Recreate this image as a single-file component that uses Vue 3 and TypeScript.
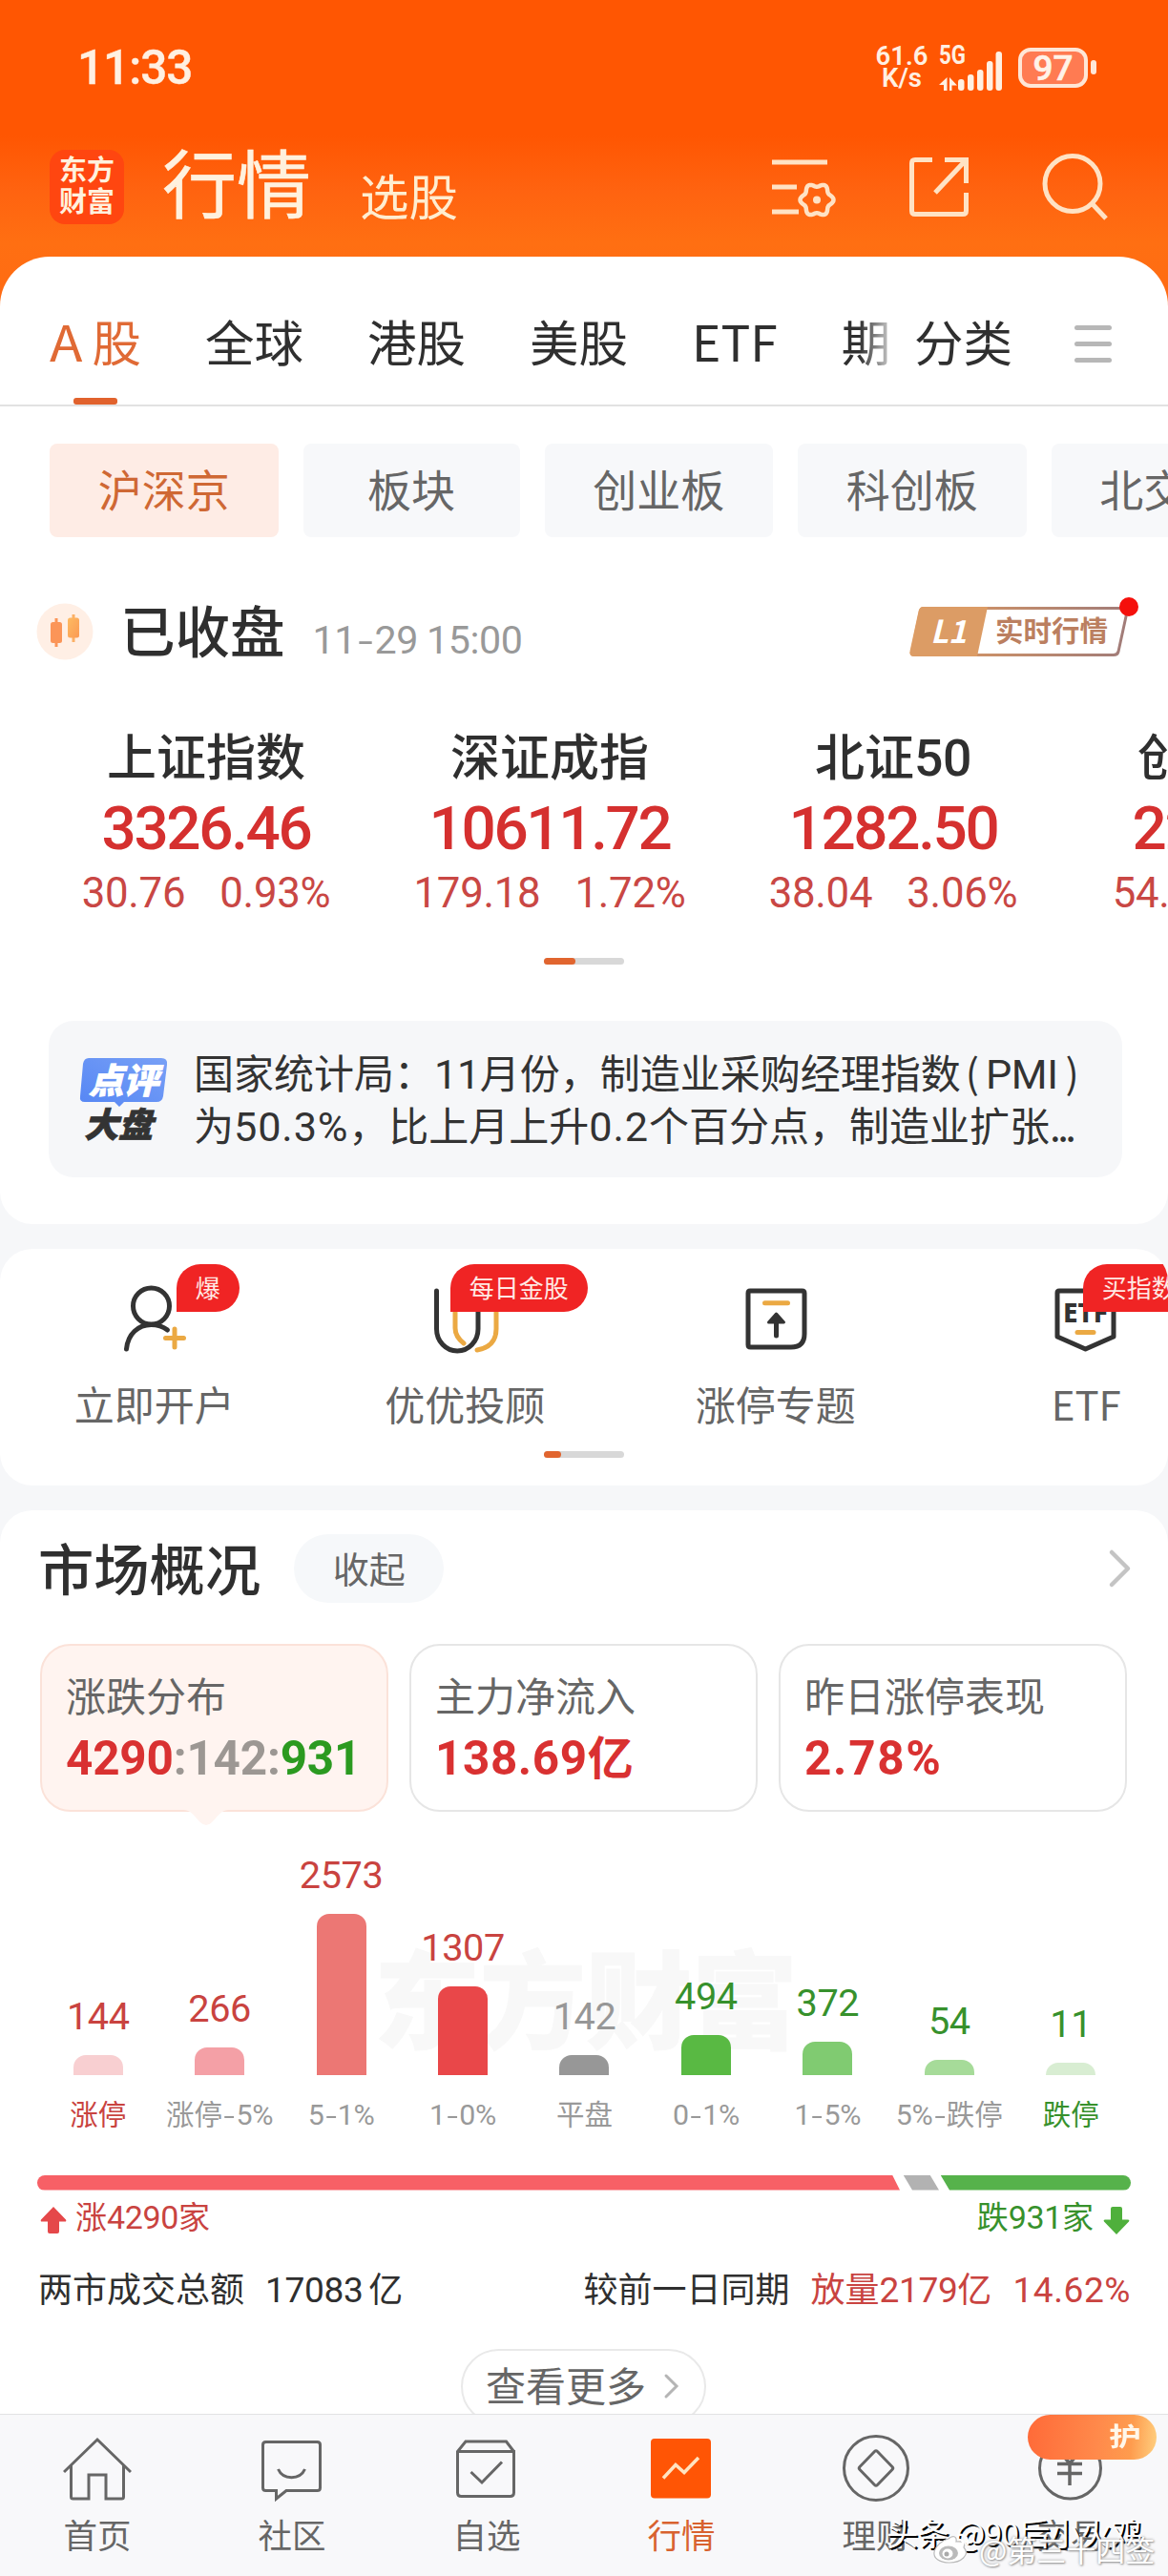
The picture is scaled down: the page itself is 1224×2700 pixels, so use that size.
<script setup lang="ts">
import { h } from 'vue'

interface Index { name: string; price: string; change: string; pct: string }
interface Bar { label: string; value: number; height: number; color: string; tone: string; edge?: boolean }

const tabs: string[] = ['全球', '港股', '美股', 'ETF', '期']
const chips: string[] = ['沪深京', '板块', '创业板', '科创板', '北交所']

const indices: Index[] = [
  { name: '上证指数', price: '3326.46', change: '30.76', pct: '0.93%' },
  { name: '深证成指', price: '10611.72', change: '179.18', pct: '1.72%' },
  { name: '北证50', price: '1282.50', change: '38.04', pct: '3.06%' },
  { name: '创业板指', price: '2224.00', change: '54.50', pct: '2.50%' },
]

const bars: Bar[] = [
  { label: '涨停', value: 144, height: 21, color: '#f8cfd1', tone: 'up', edge: true },
  { label: '涨停-5%', value: 266, height: 29, color: '#f4a0a6', tone: 'up' },
  { label: '5-1%', value: 2573, height: 169, color: '#ec7774', tone: 'up' },
  { label: '1-0%', value: 1307, height: 93, color: '#e94749', tone: 'up' },
  { label: '平盘', value: 142, height: 21, color: '#979797', tone: 'flat' },
  { label: '0-1%', value: 494, height: 42, color: '#59b943', tone: 'down' },
  { label: '1-5%', value: 372, height: 35, color: '#80cb71', tone: 'down' },
  { label: '5%-跌停', value: 54, height: 16, color: '#a6db99', tone: 'down' },
  { label: '跌停', value: 11, height: 13, color: '#d8edd2', tone: 'down', edge: true },
]

/** Sets figures in the numeric face and leaves Chinese text in the page face. */
const Mix = (props: { t: string | number }) =>
  h(
    'span',
    String(props.t)
      .split(/([0-9.:%]+|-)/)
      .filter(Boolean)
      .map((s) => (s === '-' ? h('span', { class: 'hy' }, s) : /[0-9.:%]/.test(s) ? h('span', { class: 'num' }, s) : s)),
  )
Mix.props = ['t']

/** Outline of the six-lobed settings gear. */
const gear: string =
  Array.from({ length: 72 }, (_, i) => {
    const a = (i * Math.PI) / 36
    const r = 15.6 + 1.9 * Math.cos(6 * a)
    return `${i ? 'L' : 'M'}${(50 + r * Math.cos(a)).toFixed(1)} ${(49.5 + r * Math.sin(a)).toFixed(1)}`
  }).join('') + 'z'
</script>

<template>
  <div class="page">
    <div class="scroll">
      <header class="top">
        <div class="statusbar">
          <Mix class="clock" t="11:33" />
          <div class="net"><span>61.6</span><span class="unit">K/s</span></div>
          <svg class="signal" width="66" height="50" viewBox="0 -2 66 50">
            <text x="0" y="20" class="g5" textLength="28" lengthAdjust="spacingAndGlyphs">5G</text>
            <path d="M8.500 34v14H5v-6H0zM11 34v14h2.500v-5.500H19z" />
            <rect x="20" y="36" width="6.500" height="12" rx="3" />
            <rect x="30" y="31" width="6.500" height="17" rx="3" />
            <rect x="40" y="26" width="6.500" height="22" rx="3" />
            <rect x="50" y="17" width="6.500" height="31" rx="3" />
            <rect x="59.500" y="7" width="6.500" height="41" rx="3" />
          </svg>
          <div class="battery"><span>97</span></div>
          <i class="nub"></i>
        </div>
        <div class="titlebar">
          <div class="logo"><span>东方</span><span>财富</span></div>
          <h1>行情</h1>
          <span class="sub">选股</span>
          <div class="tools">
            <svg width="72" height="72" viewBox="0 0 72 72" class="line">
              <path d="M3 10h58M3 36h26M3 62h28" />
              <path :d="gear" stroke-width="4.500" stroke-linejoin="round" />
              <circle cx="50" cy="49.500" r="4" fill="#ffe2c4" stroke="none" />
            </svg>
            <svg width="72" height="72" viewBox="0 0 72 72" class="line">
              <path d="M29 7.500H11q-3.500 0-3.500 3.500v50q0 3.500 3.500 3.500h50q3.500 0 3.500-3.500V42M42 7.500h22.500V32M64 8 32 42" />
            </svg>
            <svg width="72" height="72" viewBox="0 0 72 72" class="line">
              <circle cx="34" cy="32.500" r="29" />
              <path d="m54 53 15 16" />
            </svg>
          </div>
        </div>
      </header>

      <section class="panel">
        <nav class="tabs">
          <div class="tablist">
            <span class="tab on"><b>A</b>股</span>
            <span v-for="t in tabs" :key="t" class="tab">{{ t }}</span>
          </div>
          <span class="tab">分类</span>
          <div class="menu"><i></i><i></i><i></i></div>
        </nav>

        <div class="chips">
          <span v-for="(c, i) in chips" :key="c" class="chip" :class="{ on: i === 0, two: c.length === 2 }">{{ c }}</span>
        </div>

        <div class="closed">
          <svg class="candle" width="60" height="60" viewBox="0 0 60 60">
            <defs>
              <linearGradient id="cg" x1="0" y1="0" x2="1" y2="1">
                <stop offset="0" stop-color="#fdbb62" /><stop offset="1" stop-color="#fb9a55" />
              </linearGradient>
            </defs>
            <circle cx="30" cy="30" r="29.500" fill="#ffefe5" />
            <path d="M21 16v30" stroke="#fb9558" stroke-width="3" />
            <rect x="15" y="20" width="12" height="22" rx="2.500" fill="#fb9558" />
            <path d="M39 12v29" stroke="#fbb066" stroke-width="3" />
            <rect x="33" y="15.500" width="12" height="21" rx="2.500" fill="url(#cg)" />
          </svg>
          <h2>已收盘</h2>
          <time><Mix t="11-29 15:00" /></time>
          <div class="level">
            <svg width="232" height="54" viewBox="0 0 232 54">
              <defs>
                <linearGradient id="lg" x1="0" x2="1">
                  <stop offset="0" stop-color="#e3a368" /><stop offset=".3" stop-color="#cc9168" /><stop offset="1" stop-color="#a17c79" />
                </linearGradient>
              </defs>
              <path d="M15 2.500H225q4 0 3 4L219 48q-1 3.500-5 3.500H5q-4 0-3-4L11 6q1-3.500 4-3.500z" fill="#fff" stroke="url(#lg)" stroke-width="3" />
              <path d="M14 1H82L71 53H5q-5 0-4-5L10 5q1-4 4-4z" fill="#dc9c65" />
              <text x="22" y="39" class="l1" textLength="38" lengthAdjust="spacingAndGlyphs">L1</text>
              <text x="90" y="37" class="rt">实时行情</text>
            </svg>
            <i class="dot"></i>
          </div>
        </div>

        <div class="indices">
          <div v-for="x in indices" :key="x.name" class="index">
            <strong><Mix :t="x.name" /></strong>
            <em><Mix :t="x.price" /></em>
            <p><Mix :t="x.change" /><Mix :t="x.pct" /></p>
          </div>
        </div>
        <div class="pager"><i></i></div>

        <div class="news">
          <div class="newslogo">
            <svg width="94" height="52" viewBox="0 0 94 52">
              <defs>
                <linearGradient id="ng" x1="0" y1="1" x2="1" y2="0">
                  <stop offset="0" stop-color="#5586f4" /><stop offset="1" stop-color="#78a0f6" />
                </linearGradient>
              </defs>
              <path d="M10 0H86q7 0 6 7L88 40q-1 6-7 6H47l-5 5-5-5H6q-6 0-5-6L4 6q1-6 6-6z" fill="url(#ng)" />
              <text x="10" y="37" class="nl">点评</text>
            </svg>
            <span>大盘</span>
          </div>
          <div class="newstext">
            <p><Mix t="国家统计局：11月份，制造业采购经理指数" /><i class="po">(</i><span class="num">PMI</span><i class="pc">)</i></p>
            <p class="wide"><Mix t="为50.3%，比上月上升0.2个百分点，制造业扩张" /><i class="dots">...</i></p>
          </div>
        </div>
      </section>

      <section class="quick">
        <div class="quickrow">
          <div class="entry">
            <div class="ico">
              <svg width="80" height="80" viewBox="0 0 80 80" class="dark">
                <circle cx="36.500" cy="26" r="19" />
                <path d="M10.500 71C12 55 23 45.500 36.500 45.500c7 0 12.500 2 17 5.500" />
                <path class="gold" d="M51.500 59.500h19M61 50v19" />
              </svg>
              <span class="tag t1">爆</span>
            </div>
            <span>立即开户</span>
          </div>
          <div class="entry">
            <div class="ico">
              <svg width="80" height="80" viewBox="0 0 80 80" class="dark">
                <path class="gold" d="M30 22v27q0 9 9 16M73 22v28c0 12-7 20-20 22" />
                <path d="M10.500 10v40a21.750 23 0 0 0 43.500 0V20" />
              </svg>
              <span class="tag t2">每日金股</span>
            </div>
            <span>优优投顾</span>
          </div>
          <div class="entry">
            <div class="ico">
              <svg width="80" height="80" viewBox="0 0 80 80" class="dark">
                <path d="M13 10h54.500q2.500 0 2.500 2.500V55q0 14-14 14H13.500Q11 69 11 66.500v-54Q11 10 13 10z" />
                <path class="gold" d="M28.500 22.700h24" />
                <path d="M40.500 37v20" />
                <path d="M40.500 34l8 9h-16z" fill="#333" stroke-width="3" />
              </svg>
            </div>
            <span>涨停专题</span>
          </div>
          <div class="entry">
            <div class="ico">
              <svg width="80" height="80" viewBox="0 0 80 80" class="dark">
                <path d="M12 10h55q2 0 2 2v46L39.500 71 10 58V12q0-2 2-2z" />
                <text x="16" y="43" class="etf" textLength="47" lengthAdjust="spacingAndGlyphs">ETF</text>
                <path class="gold" d="M31 53.400h17" />
              </svg>
              <span class="tag t4">买指数</span>
            </div>
            <span>ETF</span>
          </div>
        </div>
        <div class="pager short"><i></i></div>
      </section>

      <section class="market">
        <div class="mhead">
          <h2>市场概况</h2>
          <span class="fold">收起</span>
          <svg width="26" height="42" viewBox="0 0 26 42"><path d="m4 4 17 17L4 38" fill="none" stroke="#c4c4c4" stroke-width="4.500" stroke-linecap="round" stroke-linejoin="round" /></svg>
        </div>

        <div class="cards">
          <div class="card on">
            <span>涨跌分布</span>
            <b class="ratio"><Mix class="r" t="4290" /><Mix class="n" t=":142:" /><Mix class="g" t="931" /></b>
            <svg class="tip" width="48" height="18" viewBox="0 0 48 18"><path d="M0 0H48C40 0 38 5 30 13q-6 6-12 0C10 5 8 0 0 0z" fill="#fff4f0" /></svg>
          </div>
          <div class="card"><span>主力净流入</span><b><Mix class="r" t="138.69亿" /></b></div>
          <div class="card"><span>昨日涨停表现</span><b><Mix class="r pc2" t="2.78%" /></b></div>
        </div>

        <div class="chart">
          <div class="ghost">东方财富</div>
          <div v-for="b in bars" :key="b.label" class="col">
            <Mix class="val" :class="b.tone" :t="b.value" />
            <i :style="{ height: b.height + 'px', background: b.color }"></i>
          </div>
        </div>
        <div class="labels">
          <div v-for="b in bars" :key="b.label" :class="b.edge ? b.tone : ''"><Mix :t="b.label" /></div>
        </div>

        <div class="split"><i class="s1"></i><i class="s2"></i><i class="s3"></i></div>
        <div class="counts">
          <svg width="30" height="30" viewBox="0 0 30 30"><path d="M15 1 28 14.500q1 2-1 2h-6V27q0 2-2 2h-8q-2 0-2-2V16.500H3q-2 0-1-2z" fill="#e5484a" /></svg>
          <Mix class="up" t="涨4290家" />
          <Mix class="down last" t="跌931家" />
          <svg width="30" height="30" viewBox="0 0 30 30"><path d="M15 30 28 16.500q1-2-1-2h-6V3q0-2-2-2h-8Q9 1 9 3v11.500H3q-2 0-1 2z" fill="#4fb03c" /></svg>
        </div>
        <div class="totals">
          <span>两市成交总额</span><div class="amt"><Mix t="17083" /><s></s>亿</div>
          <span class="cmp">较前一日同期</span><Mix class="vol" t="放量2179亿" /><Mix class="pct" t="14.62%" />
        </div>
        <div class="more">查看更多
          <svg width="18" height="28" viewBox="0 0 18 28"><path d="m3 3 11 11L3 25" fill="none" stroke="#b5b5b5" stroke-width="3" stroke-linecap="round" /></svg>
        </div>
      </section>
    </div>

    <footer class="nav">
      <div class="item">
        <svg width="72" height="72" viewBox="0 0 72 72"><path d="M1 40 36 6l35 34M8.500 33v33q0 2 2 2H27V43h18v25h16.500q2 0 2-2V33" /></svg>
        <span>首页</span>
      </div>
      <div class="item">
        <svg width="72" height="72" viewBox="0 0 72 72"><path d="M8.500 8.500h54q3 0 3 3v45q0 3-3 3H30L19.500 68v-8.500h-11q-3 0-3-3v-45q0-3 3-3zM21.500 37c5 11.500 23 11.500 28 0" /></svg>
        <span>社区</span>
      </div>
      <div class="item">
        <svg width="72" height="72" viewBox="0 0 72 72"><path d="M6 18.500h58.500v43q0 4-4 4h-51q-4 0-4-4v-43L14 8h42.500l8 10.500M19.500 40 31 51l21-21.500" /></svg>
        <span>自选</span>
      </div>
      <div class="item on">
        <svg width="72" height="72" viewBox="0 0 72 72"><rect x="4" y="5" width="63" height="62.500" rx="4" fill="#ff5505" stroke="none" /><path d="m17 46.500 13-14 9 8 15-15.500" stroke="#ffe3c0" stroke-width="3.500" /></svg>
        <span>行情</span>
      </div>
      <div class="item">
        <svg width="72" height="72" viewBox="0 0 72 72"><circle cx="36" cy="36" r="33.500" /><path d="M34.500 18.500q1.500-1.500 3 0l15.500 16q1.500 1.500 0 3l-15.500 16q-1.500 1.500-3 0l-15.500-16q-1.500-1.500 0-3z" /></svg>
        <span>理财</span>
      </div>
      <div class="item">
        <div class="trade">
          <svg width="72" height="72" viewBox="0 0 72 72"><circle cx="35.500" cy="36" r="32" /><path d="M22 31.500h26M22 41.500h26M35 31v23M35 31 24 18M35 31l11-13" stroke-width="3.500" /></svg>
          <div class="promo"><span>护</span></div>
        </div>
        <span>交易</span>
      </div>
      <div class="mark1">头条 @90后小火鸡</div>
      <div class="mark2">
        <svg width="40" height="34" viewBox="0 0 40 34"><path d="M17 7c4-4 9-3 8 3 7-1 10 2 8 6 7 8-3 16-15 16C7 32 1 27 2 21 3 15 11 8 17 7z" fill="#fff" stroke="#bbb" stroke-width="1.200" /><ellipse cx="17" cy="22" rx="10" ry="7.500" fill="#bbb" /><ellipse cx="16" cy="22.500" rx="5.500" ry="5" fill="#fff" /><circle cx="15" cy="23" r="2.500" fill="#aaa" /><path d="M28 3c6-1 10 4 9 10M28 8c3 0 5 2 4 5" fill="none" stroke="#fff" stroke-width="2.500" /></svg>
        <span>@第三十四签</span>
      </div>
    </footer>
  </div>
</template>

<style>
body { margin: 0; }
.num { font-family: Roboto, sans-serif; font-size: 1.03em; letter-spacing: -.01em; line-height: 0; }
.index em .num { letter-spacing: -.037em; }
.index p .num { letter-spacing: -.006em; }
.clock .num { letter-spacing: -.02em; }
.card b .num { letter-spacing: .012em; }
.card b.ratio .num { letter-spacing: -.004em; }
.card b .pc2 .num { letter-spacing: .035em; }
.newstext .wide .num { letter-spacing: .02em; }
.totals .pct .num { letter-spacing: .015em; }
.hy { display: inline-block; transform: scaleX(1.3); margin: 0 .07em; line-height: 0; }
</style>

<style scoped>
.page { width: 1224px; height: 2700px; overflow: hidden; display: flex; flex-direction: column; background: #f6f7f9; font-family: "Noto Sans CJK SC", "Noto Sans", sans-serif; color: #333; line-height: 1; }
.page * { box-sizing: border-box; }
.page h1, .page h2, .page p { margin: 0; font-weight: 400; }
.page i, .page em { font-style: normal; }
.page s { text-decoration: none; }
.page svg { display: block; flex: none; }
.page span { white-space: nowrap; }
.scroll { height: 2530px; overflow: hidden; flex: none; }

.top { height: 329px; background: linear-gradient(#ff5602 0, #ff5602 142px, #ff6310 200px, #ff6f12 255px, #ff6a14 329px); }
.statusbar { height: 141px; display: flex; align-items: center; padding-left: 81px; color: #fff0e2; }
.clock { font-size: 48px; font-weight: 500; margin-top: -7px; letter-spacing: .3px; -webkit-text-stroke: .4px #fff0e2; }
.net { margin-left: auto; display: flex; flex-direction: column; align-items: center; font-family: Roboto, sans-serif; font-size: 27.500px; line-height: 23px; font-weight: 600; width: 54px; margin-top: -1px; }
.signal { margin: -2px 0 0 12px; fill: #fff0e2; }
.g5 { font-family: Roboto, sans-serif; font-size: 27px; font-weight: 700; }
.battery { margin-left: 17px; width: 73px; height: 42px; border: 4px solid #ffe6d6; border-radius: 13px; background: #ff7b52; display: flex; justify-content: center; align-items: center; font-family: Roboto, sans-serif; font-size: 37px; font-weight: 500; color: #fff3e8; }
.battery span { margin-top: 1px; -webkit-text-stroke: .6px #fff3e8; }
.nub { width: 6px; height: 15px; border-radius: 3px; background: #ffe6d6; margin: 0 75px 0 3px; }
.titlebar { display: flex; align-items: flex-start; padding-left: 52px; color: #fff1de; }
.logo { width: 78px; height: 78px; margin-top: 16px; border-radius: 16px; background: #ff4610; display: flex; flex-direction: column; align-items: center; font-size: 29px; line-height: 33px; font-weight: 700; padding-top: 3px; }
.titlebar h1 { font-size: 78px; margin: 9px 0 0 40px; -webkit-text-stroke: .6px #fff1de; }
.sub { font-size: 51.500px; margin: 37px 0 0 51px; color: #ffedd0; }
.tools { margin: 19px 62px 0 auto; display: flex; gap: 70px; }
.line { fill: none; stroke: #ffe2c4; stroke-width: 5; }

.panel { margin-top: -60px; height: 1014px; background: #fff; border-radius: 52px 52px 34px 34px; overflow: hidden; }
.tabs { height: 157px; border-bottom: 2px solid #e2e2e2; display: flex; padding-left: 52px; font-size: 51.500px; }
.tablist { width: 906px; display: flex; gap: 67px; overflow: hidden; -webkit-mask-image: linear-gradient(90deg, #000 848px, transparent 892px); mask-image: linear-gradient(90deg, #000 848px, transparent 892px); }
.tab { padding-top: 62px; flex: none; color: #2f2f2f; }
.tab.on { color: #e06a35; position: relative; width: 96px; display: flex; justify-content: space-between; }
.tab.on b { font-weight: 400; transform: scaleX(1.1); transform-origin: left; }
.tab.on::after { content: ""; position: absolute; left: 25px; bottom: 0; width: 46px; height: 7px; border-radius: 3px; background: #e1622d; }
.menu { margin: 72px 0 0 65px; width: 39px; display: flex; flex-direction: column; gap: 12px; }
.menu i { height: 5px; border-radius: 3px; background: #b7b7b7; }

.chips { margin-top: 39px; padding-left: 52px; display: flex; gap: 26px; overflow: hidden; }
.chip { flex: none; width: 239.500px; height: 98px; border-radius: 8px; background: #f7f8fa; color: #666; font-size: 46px; line-height: 93px; text-align: center; }
.chip.two { width: 227px; }
.chip.on { background: #feece5; color: #cf6834; }

.closed { margin-top: 43px; height: 111px; display: flex; align-items: center; padding-left: 38px; }
.closed h2 { font-size: 57.500px; font-weight: 500; margin: -3px 0 0 28px; color: #2f2f2f; }
.closed time { font-size: 40px; color: #999; margin: 12px 0 0 29px; }
.level { position: relative; margin-left: auto; margin-right: 39px; }
.l1 { font-size: 33px; font-weight: 700; font-style: italic; fill: #fff; }
.rt { font-size: 29.500px; font-weight: 700; fill: #bb7f60; }
.dot { position: absolute; right: -8px; top: -9px; width: 20px; height: 20px; border-radius: 50%; background: #f5100c; }

.indices { margin: 48px 0 0 36px; display: flex; }
.index { width: 360px; flex: none; display: flex; flex-direction: column; align-items: center; color: #d5302f; }
.index strong { font-size: 52px; font-weight: 500; color: #2f2f2f; }
.index em { font-size: 62px; font-weight: 500; margin-top: 15px; }
.index p { font-size: 42.500px; margin-top: 18px; color: #c94744; display: flex; gap: 36px; }
.pager { width: 84px; height: 7px; border-radius: 4px; background: #d8d8d8; margin: 49px auto 0; }
.pager i { display: block; width: 33px; height: 7px; border-radius: 4px; background: #e1652f; }
.pager.short { margin-top: 29px; }
.pager.short i { width: 18px; }

.news { margin: 59px 48px 0 51px; height: 164px; border-radius: 26px; background: #f6f7f9; display: flex; }
.newslogo { width: 94px; margin: 39px 0 0 32px; }
.nl { font-size: 36.500px; font-weight: 900; font-style: italic; fill: #fff; stroke: #fff; stroke-width: .8px; }
.newslogo span { display: block; font-size: 36px; font-weight: 900; font-style: italic; -webkit-text-stroke: .8px #333; margin: -3px 0 0 5px; }
.newstext { margin: 25px 0 0 26px; font-size: 42px; line-height: 55px; }
.newstext p { white-space: nowrap; }
.po { margin: 0 7px 0 5px; }
.pc { margin-left: 8px; }
.dots { letter-spacing: -3.500px; }

.quick { margin-top: 26px; height: 248px; border-radius: 34px; background: #fff; overflow: hidden; }
.quickrow { display: flex; margin-left: -1px; }
.entry { width: 325.500px; flex: none; padding-top: 34px; display: flex; flex-direction: column; align-items: center; font-size: 42px; color: #666; }
.entry > span { margin-top: 27px; }
.ico { position: relative; width: 80px; height: 80px; }
.dark { fill: none; stroke: #333; stroke-width: 5; stroke-linecap: round; stroke-linejoin: round; }
.gold { stroke: #eba943; }
.etf { font-family: "Noto Sans", sans-serif; font-size: 29px; font-weight: 800; fill: #333; stroke: none; }
.tag { position: absolute; top: -18px; height: 50px; line-height: 47px; padding: 0 20px; border-radius: 25px 25px 25px 0; background: #f02424; color: #ffe9e4; font-size: 26px; }
.t1 { left: 63px; }
.t2 { left: 24.500px; }
.t4 { left: 36.500px; }

.market { margin-top: 26px; height: 1000px; border-radius: 34px 34px 0 0; background: #fff; padding: 25px 39px 0 40px; }
.mhead { height: 72px; display: flex; align-items: center; }
.mhead h2 { font-size: 58.300px; font-weight: 500; margin-top: -3px; color: #2f2f2f; }
.mhead svg { margin-left: auto; margin-right: -2px; }
.fold { margin-left: 35px; width: 157px; height: 72px; border-radius: 36px; background: #f6f8fa; font-size: 38px; line-height: 70px; text-align: center; color: #666; }
.cards { margin: 43px -1px 0 2px; display: flex; gap: 22px; }
.card { position: relative; flex: none; width: 365px; height: 176px; border: 2px solid #e6e6e6; border-radius: 32px; padding: 30px 0 0 25px; display: flex; flex-direction: column; font-size: 42px; color: #666; }
.card.on { background: #fff4f0; border-color: #fbe2d9; }
.card b { margin-top: 18px; font-size: 48px; font-weight: 700; }
.card .r { color: #d93131; }
.card .n { color: #9c9793; }
.card .g { color: #2b9a20; }
.ratio { white-space: nowrap; }
.tip { position: absolute; left: 148px; bottom: -18px; }

.chart { position: relative; height: 276px; margin: 0 -1px; display: flex; align-items: flex-end; }
.ghost { position: absolute; left: 353px; top: 136px; font-size: 111px; font-weight: 900; color: #f8f8f8; -webkit-text-stroke: 1px #f8f8f8; white-space: nowrap; }
.col { position: relative; flex: 1; display: flex; flex-direction: column; align-items: center; }
.col i { width: 52px; border-radius: 13px 13px 0 0; }
.val { font-size: 38.500px; margin-bottom: 25px; }
.up { color: #c94340; }
.flat { color: #979797; }
.down { color: #37912c; }
.labels { margin: 25px -1px 0; display: flex; font-size: 29.500px; color: #999; }
.labels div { flex: 1 1 0; width: 0; display: flex; justify-content: center; }
.labels .up { color: #c94340; }
.labels .down { color: #37912c; }

.split { margin: 50px 0 0 -1px; height: 16px; display: flex; }
.s1 { width: 904px; border-radius: 8px 0 0 8px; background: #f76066; clip-path: polygon(0 0, 896px 0, 100% 100%, 0 100%); }
.s2 { width: 37.500px; margin-left: 3.500px; background: #b2b2b2; clip-path: polygon(0 0, 28px 0, 100% 100%, 9.500px 100%); }
.s3 { flex: 1; margin-left: 1.500px; border-radius: 0 8px 8px 0; background: #56b24b; clip-path: polygon(0 0, 100% 0, 100% 100%, 9.500px 100%); }
.counts { margin-top: 10px; height: 33px; display: flex; font-size: 33px; }
.counts svg { margin: 6px 0 0 1px; }
.counts .up { margin-left: 8px; }
.last { margin: 0 8px 0 auto; }
.totals { margin-top: 40px; height: 36px; display: flex; font-size: 36px; color: #2f2f2f; }
.amt { margin-left: 22px; white-space: nowrap; }
.amt s { display: inline-block; width: 6px; }
.cmp { margin-left: auto; }
.vol { margin-left: 22px; color: #c94340; }
.pct { margin: 0 0 0 22px; color: #c94340; }
.more { margin: 47px 0 0 443px; width: 257px; height: 79px; border: 2px solid #e9e9e9; border-radius: 40px; display: flex; align-items: center; padding: 0 0 4px 24px; font-size: 42px; color: #666; white-space: nowrap; }
.more svg { margin: 4px 0 0 18px; }

.nav { position: relative; height: 170px; flex: none; border-top: 1px solid #e2e2e4; background: #f8f8fa; display: flex; }
.item { width: 204px; padding-top: 20px; display: flex; flex-direction: column; align-items: center; color: #666; font-size: 35.500px; }
.item > span { margin-top: 15px; }
.item svg { fill: none; stroke: #666; stroke-width: 3; }
.item.on { color: #d8622f; }
.trade { position: relative; }
.promo { position: absolute; left: -9px; top: -20px; width: 135px; height: 47px; border-radius: 24px; background: linear-gradient(95deg, #ff6a38, #ff8a4b 55%, #fe9c4e 80%, #ffd080); color: #fff7ea; font-size: 30px; font-weight: 700; line-height: 43px; padding-right: 18px; display: flex; justify-content: flex-end; }
.promo span { transform: scale(1.12, .92); }
.mark1 { position: absolute; left: 929px; top: 107px; font-size: 33px; color: #fdfdfd; text-shadow: 2px 2px 0 #000; white-space: nowrap; letter-spacing: -.5px; }
.mark2 { position: absolute; left: 977px; top: 123px; display: flex; align-items: center; gap: 9px; font-size: 31px; color: #fff; text-shadow: 0 0 3px #999, 1px 1px 2px #999; }
</style>
